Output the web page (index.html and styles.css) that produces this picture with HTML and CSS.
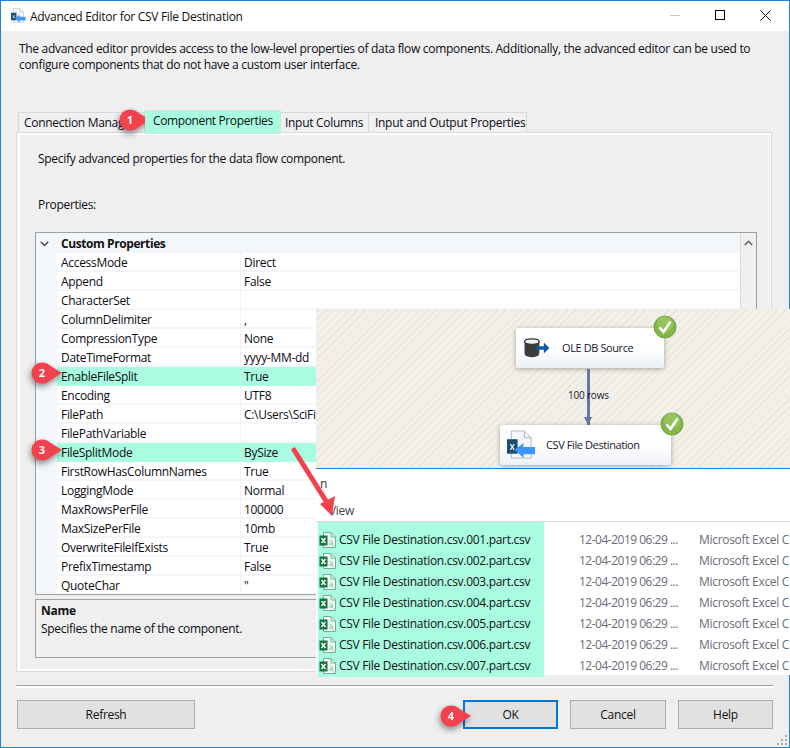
FILE: index.html
```html
<!DOCTYPE html>
<html lang="en">
<head>
<meta charset="utf-8">
<title>Advanced Editor for CSV File Destination</title>
<link rel="stylesheet" href="styles.css">
</head>
<body>
<svg class="defs" width="0" height="0" aria-hidden="true">
  <defs>
    <symbol id="callout" viewBox="0 0 32 22"><path d="M11 .5C14 .5 17 1.7 19 3.6L31 11 19 18.4C17 20.3 14 21.5 11 21.5A10.5 10.5 0 0 1 11 .5Z" fill="#f2424e"/></symbol>
    <symbol id="xl" viewBox="0 0 17 16">
      <path d="M4.500 .5H12L16.500 5V15.500H4.500Z" fill="#f4fbf7" stroke="#6fb08f"/>
      <path d="M12 .5V5H16.500" fill="none" stroke="#6fb08f"/>
      <path d="M10.500 9c1.300-.9 2.800-.5 2.800.7V13M13.300 11c-1.800-.7-3.200 0-2.900 1.100.3.900 2.100.7 2.900-.4M14.500 13c.2.700 0 1.200-.5 1.600" fill="none" stroke="#86bfa2" stroke-width=".9"/>
      <rect x=".5" y="3.500" width="8" height="10" fill="#14733f"/>
      <path d="M2.500 6l4 5M6.500 6l-4 5" stroke="#fff" stroke-width="1.400"/>
    </symbol>
    <symbol id="dest" viewBox="0 0 30 32">
      <path d="M4.500 1H18L25 8V29H4.500Z" fill="#f6f7f9" stroke="#b4b6bb"/>
      <path d="M18 1V8H25" fill="none" stroke="#b4b6bb"/>
      <rect x="0" y="9.500" width="11" height="15" fill="#1c4f73"/>
      <path d="M3.500 14.500l4 6M7.500 14.500l-4 6" stroke="#fff" stroke-width="1.200"/>
      <path d="M8 20.500L17 13.500V17.500H29V25H17V29Z" fill="#3c96ff"/>
    </symbol>
    <symbol id="ok" viewBox="0 0 24 24">
      <circle cx="12" cy="12" r="11" fill="#84b648" stroke="#6f9f3d"/>
      <circle cx="12" cy="9" r="8" fill="#a4cf73" opacity=".55"/>
      <path d="M6.500 12.500L10.500 17 17.500 6.500" fill="none" stroke="#fff" stroke-width="2.600"/>
    </symbol>
  </defs>
</svg>

<main class="window">
  <header class="titlebar">
    <svg class="title-icon"><use href="#dest"/></svg>
    <h1 class="title">Advanced Editor for CSV File Destination</h1>
    <div class="controls">
      <span class="ctl ctl-min"></span>
      <span class="ctl ctl-max"></span>
      <svg class="ctl-close" viewBox="0 0 11 11"><path d="M.5.5l10 10M10.500.5l-10 10" stroke="#111" fill="none"/></svg>
    </div>
  </header>

  <section class="content">
    <p class="intro">The advanced editor provides access to the low-level properties of data flow components. Additionally, the advanced editor can be used to configure components that do not have a custom user interface.</p>

    <nav class="tabs">
      <span class="tab tab-conn">Connection Manager</span>
      <span class="tab tab-active">Component Properties</span>
      <span class="tab tab-cols">Input Columns</span>
      <span class="tab tab-io">Input and Output Properties</span>
    </nav>

    <div class="panel">
      <p class="lead">Specify advanced properties for the data flow component.</p>
      <p class="props-label">Properties:</p>

      <div class="grid">
        <div class="grid-head">
          <svg class="chev" viewBox="0 0 9 6"><path d="M.8.8L4.500 4.500 8.200.8" fill="none" stroke="#444" stroke-width="1.400"/></svg>
          <strong>Custom Properties</strong>
        </div>
        <div class="grid-body">
          <div class="rows">
            <div class="row"><span>AccessMode</span><span>Direct</span></div>
            <div class="row"><span>Append</span><span>False</span></div>
            <div class="row"><span>CharacterSet</span><span></span></div>
            <div class="row"><span>ColumnDelimiter</span><span>,</span></div>
            <div class="row"><span>CompressionType</span><span>None</span></div>
            <div class="row"><span>DateTimeFormat</span><span>yyyy-MM-dd</span></div>
            <div class="row row-hi"><span>EnableFileSplit</span><span>True</span></div>
            <div class="row"><span>Encoding</span><span>UTF8</span></div>
            <div class="row"><span>FilePath</span><span>C:\Users\SciFi</span></div>
            <div class="row"><span>FilePathVariable</span><span></span></div>
            <div class="row row-hi"><span>FileSplitMode</span><span>BySize</span></div>
            <div class="row"><span>FirstRowHasColumnNames</span><span>True</span></div>
            <div class="row"><span>LoggingMode</span><span>Normal</span></div>
            <div class="row"><span>MaxRowsPerFile</span><span>100000</span></div>
            <div class="row"><span>MaxSizePerFile</span><span>10mb</span></div>
            <div class="row"><span>OverwriteFileIfExists</span><span>True</span></div>
            <div class="row"><span>PrefixTimestamp</span><span>False</span></div>
            <div class="row"><span>QuoteChar</span><span>"</span></div>
          </div>
        </div>
        <div class="scroll">
          <svg class="scroll-up" viewBox="0 0 9 6"><path d="M.8 5L4.500 1.300 8.200 5" fill="none" stroke="#606060" stroke-width="1.600"/></svg>
        </div>
      </div>

      <div class="help">
        <strong>Name</strong>
        <p>Specifies the name of the component.</p>
      </div>
    </div>

    <div class="rule"></div>

    <footer class="buttons">
      <button class="btn btn-refresh">Refresh</button>
      <button class="btn btn-ok">OK</button>
      <button class="btn btn-cancel">Cancel</button>
      <button class="btn btn-ok-size">Help</button>
    </footer>
  </section>

  <svg class="grip" viewBox="0 0 12 12"><path d="M9 1h2v2H9zM5 5h2v2H5zM9 5h2v2H9zM1 9h2v2H1zM5 9h2v2H5zM9 9h2v2H9z" fill="#a8a8a8"/></svg>

  <!-- Pasted result screenshot lying over the dialog -->
  <aside class="paste">
    <div class="canvas">
      <div class="node node-src">
        <svg class="node-icon-src" viewBox="0 0 30 24">
          <ellipse cx="10" cy="12" rx="10" ry="12" fill="#f4f4f4"/>
          <path d="M2 5V18C2 20.500 6 22 10 22S18 20.500 18 18V5Z" fill="#3b3b3b"/>
          <ellipse cx="10" cy="5" rx="8" ry="3" fill="#f2f2f2" stroke="#3b3b3b" stroke-width="1.500"/>
          <path d="M15 10H23V6L29 12 23 18V14H15Z" fill="#0b5aa6"/>
        </svg>
        <span class="node-src-label">OLE DB Source</span>
      </div>
      <svg class="check check-1"><use href="#ok"/></svg>
      <div class="flow-line"></div>
      <span class="flow-label">100 rows</span>
      <div class="node node-dest">
        <svg class="node-icon-dest"><use href="#dest"/></svg>
        <span>CSV File Destination</span>
      </div>
      <svg class="check check-2"><use href="#ok"/></svg>
    </div>
    <div class="explorer-head">
      <span class="head-n">n</span>
      <span class="head-view">View</span>
    </div>
    <div class="files">
      <ul class="file-names">
        <li><svg class="xl"><use href="#xl"/></svg>CSV File Destination.csv.001.part.csv</li>
        <li><svg class="xl"><use href="#xl"/></svg>CSV File Destination.csv.002.part.csv</li>
        <li><svg class="xl"><use href="#xl"/></svg>CSV File Destination.csv.003.part.csv</li>
        <li><svg class="xl"><use href="#xl"/></svg>CSV File Destination.csv.004.part.csv</li>
        <li><svg class="xl"><use href="#xl"/></svg>CSV File Destination.csv.005.part.csv</li>
        <li><svg class="xl"><use href="#xl"/></svg>CSV File Destination.csv.006.part.csv</li>
        <li><svg class="xl"><use href="#xl"/></svg>CSV File Destination.csv.007.part.csv</li>
      </ul>
      <ul class="file-meta">
        <li><span>12-04-2019 06:29 ...</span><span>Microsoft Excel C</span></li>
        <li><span>12-04-2019 06:29 ...</span><span>Microsoft Excel C</span></li>
        <li><span>12-04-2019 06:29 ...</span><span>Microsoft Excel C</span></li>
        <li><span>12-04-2019 06:29 ...</span><span>Microsoft Excel C</span></li>
        <li><span>12-04-2019 06:29 ...</span><span>Microsoft Excel C</span></li>
        <li><span>12-04-2019 06:29 ...</span><span>Microsoft Excel C</span></li>
        <li><span>12-04-2019 06:29 ...</span><span>Microsoft Excel C</span></li>
      </ul>
    </div>
  </aside>

  <svg class="big-arrow" viewBox="0 0 50 76">
    <path d="M3 3L35 54" stroke="#f2424e" stroke-width="5" stroke-linecap="round" fill="none"/>
    <path d="M29 57L44 49 41 69Z" fill="#f2424e"/>
  </svg>

  <div class="badge badge-1"><svg><use href="#callout"/></svg><span>1</span></div>
  <div class="badge badge-2"><svg><use href="#callout"/></svg><span>2</span></div>
  <div class="badge badge-3"><svg><use href="#callout"/></svg><span>3</span></div>
  <div class="badge badge-4"><svg><use href="#callout"/></svg><span>4</span></div>
</main>
</body>
</html>
```
FILE: styles.css
```css
* { box-sizing: border-box; }
html, body { margin: 0; padding: 0; background: #fff; }
body { width: 790px; height: 748px; overflow: hidden; font: 12px/16px "Open Sans", "Noto Sans", sans-serif; letter-spacing: -.3px; color: #0c0c14; }
p, h1, ul { margin: 0; padding: 0; font: inherit; }
ul { list-style: none; }
.defs { position: absolute; }

.window { position: relative; width: 790px; height: 748px; border: 1px solid #1883d7; background: #efefef; display: flex; flex-direction: column; }

.titlebar { height: 30px; background: #fff; display: flex; align-items: center; padding-left: 10px; flex: none; }
.title-icon { width: 15px; height: 16px; margin-right: 4px; }
.title { color: #111; position: relative; top: 1px; }
.controls { margin-left: auto; display: flex; align-items: center; height: 100%; padding-bottom: 2px; }
.ctl-min { width: 10px; height: 1px; background: #c8c8c8; margin-right: 35px; }
.ctl-max { width: 10px; height: 10px; border: 1px solid #000; margin-right: 35px; }
.ctl-close { width: 11px; height: 11px; margin-right: 18px; }

.content { flex: 1; padding: 10px 16px 0 15px; }
.intro { width: 760px; padding-left: 3px; margin-bottom: 39px; }

.tabs { display: flex; height: 20px; margin-left: 2px; align-items: flex-start; }
.tab { height: 21px; border: 1px solid #d9d9d9; border-left-width: 0; background: #f0f0f0; padding: 2px 0 0 5px; white-space: nowrap; overflow: hidden; }
.tab-conn { width: 127px; border-left-width: 1px; }
.tab-active { width: 136px; height: 24px; margin-top: -2px; background: #a9fce0; border: 1px solid #c5e9dc; padding: 2px 0 0 7px; position: relative; z-index: 1; letter-spacing: -.38px; }
.tab-cols { width: 88px; padding-left: 4px; }
.tab-io { width: 158px; padding-left: 6px; }

.panel { width: 756px; height: 540px; border: 1px solid #d9d9d9; box-shadow: inset 3px 0 #fff, inset 0 -2px #fff, inset -1px 0 #fff, inset 0 2px #fff; padding: 18px 0 0 21px; }
.lead { margin-bottom: 30px; }
.props-label { margin-bottom: 19px; }

.grid { width: 722px; height: 363px; margin-left: -3px; border: 1px solid #a0a0a0; background: #f3f7fc; display: grid; grid-template-columns: 1fr 16px; grid-template-rows: 20px 1fr; }
.grid-head { grid-column: 1; display: flex; align-items: center; padding: 1px 0 0 4px; }
.grid-head strong { font-weight: 700; margin-left: 12px; letter-spacing: -.42px; color: #111; }
.chev { width: 9px; height: 6px; }
.grid-body { grid-column: 1; padding-left: 21px; overflow: hidden; }
.row { height: 19px; background: #fff; border-bottom: 2px solid #f3f7fc; display: grid; grid-template-columns: 183px 1fr; line-height: 19px; }
.row > span { padding-left: 4px; white-space: nowrap; }
.row > span + span { border-left: 1px solid #eef3f9; padding-left: 3px; }
.row-hi { background: #a9fce0; border-bottom-color: #a9fce0; }
.row-hi > span + span { border-left-color: #c5f5e3; }
.scroll { grid-column: 2; grid-row: 1 / 3; background: #f0f0f0; border-left: 1px solid #dcdcdc; display: flex; justify-content: center; padding-top: 7px; }
.scroll-up { width: 9px; height: 6px; }

.help { width: 722px; height: 59px; margin: 4px 0 0 -3px; border: 1px solid #a0a0a0; padding: 3px 5px; }
.help strong { display: block; margin-bottom: 2px; color: #111; }

.rule { width: 757px; height: 3px; margin-top: 13px; border-top: 1px solid #a0a0a0; border-bottom: 2px solid #fff; }

.buttons { display: flex; margin: 12px 0 0 1px; }
.btn { flex: none; width: 95px; height: 29px; padding: 0; border: 1px solid #adadad; background: #e1e1e1; font: inherit; letter-spacing: inherit; color: #111; }
.btn-refresh { width: 178px; margin-right: 268px; }
.btn-ok { border: 2px solid #0078d7; margin-right: 12px; }
.btn-cancel { width: 96px; margin-right: 12px; }

.grip { position: absolute; right: 1px; bottom: 1px; width: 12px; height: 12px; }

.paste { position: absolute; left: 315px; top: 308px; width: 474px; height: 366px; background: #fff; display: flex; flex-direction: column; }
.canvas { position: relative; height: 160px; border-bottom: 1px solid #1883d7; background: repeating-linear-gradient(-45deg, #f3f0e9 0 4.500px, #e8e4db 4.500px 5.500px); flex: none; }
.node { position: absolute; background: linear-gradient(#fff 50%, #edf0f5); border-radius: 3px; box-shadow: 0 1px 5px rgba(60,50,30,.4); display: flex; align-items: center; font-size: 11px; letter-spacing: -.4px; color: #16162c; }
.node-src { left: 200px; top: 19px; width: 148px; height: 40px; }
.node-dest { left: 184px; top: 116px; width: 171px; height: 40px; padding-left: 46px; }
.node-icon-src { position: absolute; left: 6px; top: 9px; width: 29px; height: 22px; }
.node-icon-dest { position: absolute; left: 7px; top: 5px; width: 29px; height: 31px; }
.node-src-label { margin-left: 46px; }
.check { position: absolute; width: 24px; height: 24px; }
.check-1 { left: 337px; top: 6px; }
.check-2 { left: 344px; top: 103px; }
.flow-line { position: absolute; left: 271px; top: 60px; width: 3px; height: 56px; background: #5f7aa6; }
.flow-line::after { content: ""; position: absolute; left: -3px; bottom: 0; border: 4.500px solid transparent; border-bottom: 0; border-top: 8px solid #5f7aa6; }
.flow-label { position: absolute; left: 252px; top: 78px; font-size: 10px; color: #16162c; letter-spacing: -.2px; }

.explorer-head { height: 53px; flex: none; border-bottom: 1px solid #d8d8d8; position: relative; padding: 7px 0 0 4px; color: #333; }
.head-view { display: block; margin: 11px 0 0 9px; color: #444; }
.head-n { display: block; }

.files { flex: 1; display: flex; }
.file-names { margin: 0 0 -2px 2px; width: 226px; height: 155px; background: #a9fce0; padding-top: 7px; position: relative; }
.file-names li { height: 21px; display: flex; align-items: center; color: #111; }
.xl { width: 17px; height: 16px; margin: 0 3px 0 1px; flex: none; }
.file-meta { padding: 7px 0 0 35px; white-space: nowrap; color: #6b6b76; }
.file-meta li { height: 21px; display: flex; align-items: center; }
.file-meta span:first-child { width: 120px; letter-spacing: -.5px; }

.big-arrow { position: absolute; left: 290px; top: 446px; width: 50px; height: 76px; }

.badge { position: absolute; width: 32px; height: 22px; filter: drop-shadow(-1px 3px 3px rgba(0,0,0,.45)); }
.badge svg { display: block; width: 32px; height: 22px; }
.badge span { position: absolute; left: 0; top: 2px; width: 22px; text-align: center; color: #fff; font-weight: 700; font-size: 11px; line-height: 17px; letter-spacing: 0; }
.badge-1 { left: 118px; top: 108px; }
.badge-2 { left: 30px; top: 361px; }
.badge-3 { left: 30px; top: 438px; }
.badge-4 { left: 439px; top: 704px; }
```
